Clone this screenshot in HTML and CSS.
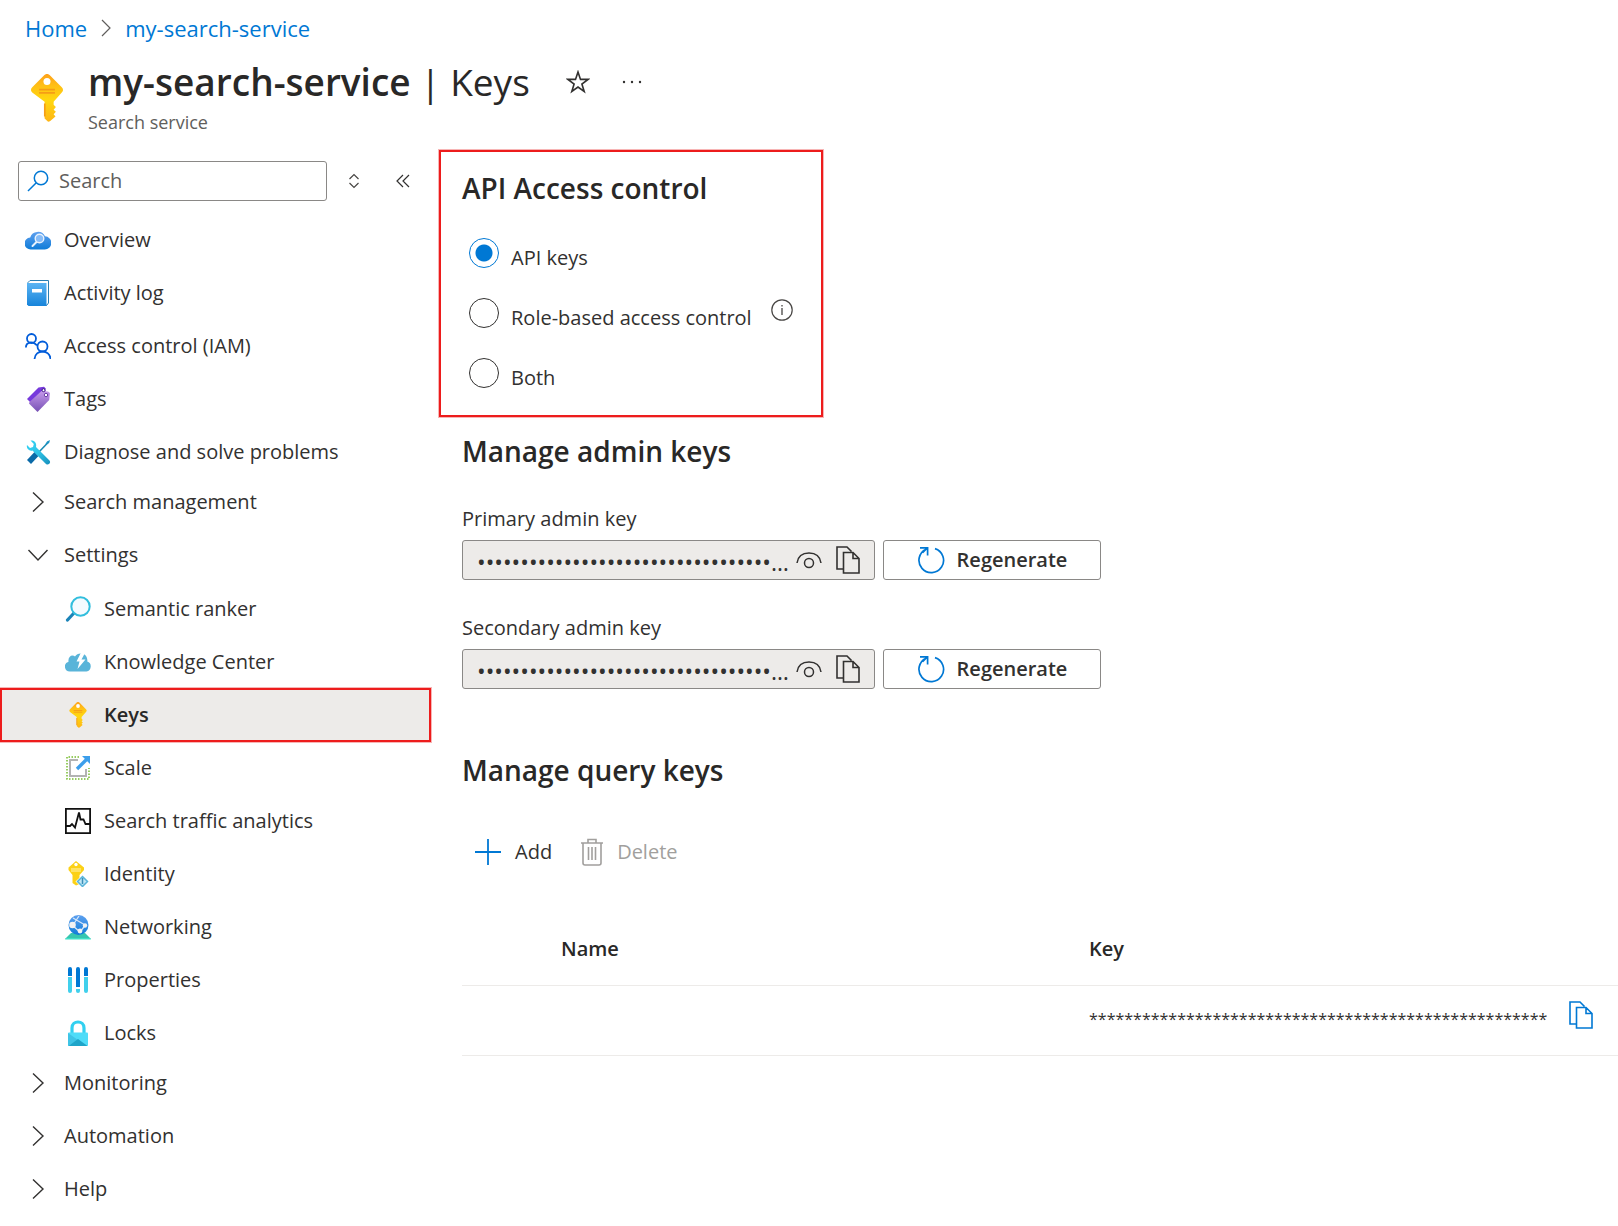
FILE: index.html
```html
<!DOCTYPE html>
<html lang="en">
<head>
<meta charset="utf-8">
<meta name="viewport" content="width=device-width, initial-scale=1">
<title>my-search-service | Keys</title>
<link rel="stylesheet" href="styles.css">
</head>
<body>
<svg class="sprite" aria-hidden="true">
  <defs>
    <linearGradient id="gold" x1="0" y1="0" x2="0" y2="1"><stop offset="0" stop-color="#fea11b"/><stop offset=".25" stop-color="#ffc016"/><stop offset=".55" stop-color="#ffd70f"/><stop offset="1" stop-color="#feb516"/></linearGradient>
    <linearGradient id="blue" x1="0" y1="0" x2="0" y2="1"><stop offset="0" stop-color="#5ea0ef"/><stop offset="1" stop-color="#0f7cd8"/></linearGradient>
    <linearGradient id="book" x1="0" y1="0" x2="0" y2="1"><stop offset="0" stop-color="#5bb4f3"/><stop offset="1" stop-color="#1784da"/></linearGradient>
    <linearGradient id="purple" x1="0" y1="0" x2="0" y2="1"><stop offset="0" stop-color="#c69aeb"/><stop offset="1" stop-color="#7650b4"/></linearGradient>
    <linearGradient id="teal" x1="0" y1="0" x2="1" y2="1"><stop offset="0" stop-color="#32d4f5"/><stop offset=".5" stop-color="#2fc3e6"/><stop offset="1" stop-color="#168fbc"/></linearGradient>
    <linearGradient id="cyan" x1="0" y1="0" x2="0" y2="1"><stop offset="0" stop-color="#32bedd"/><stop offset="1" stop-color="#50e6ff"/></linearGradient>
    <symbol id="key" viewBox="0 0 18 26">
      <path fill="url(#gold)" d="M7.600 .6a2 2 0 0 1 2.800 0l6.600 6.600a2 2 0 0 1 0 2.800l-4.400 5v1.700l1.200 1.200-1.200 1.400 1.200 1.200-1.200 1.300 1 1.200-3 2.600-1 .2-1.900-1.700V15L1 10a2 2 0 0 1 0-2.800z"/>
      <circle cx="9" cy="4" r="1.900" fill="#fff"/><path stroke="#f59d16" stroke-width=".9" d="M4.700 8.500h8.600M4.700 10.200h8.600M7.800 16v7"/>
    </symbol>
    <symbol id="chevron" viewBox="0 0 26 26"><path fill="none" stroke="#323130" stroke-width="1.400" d="M8 3.500l10 9.500-10 9.500"/></symbol>
    <symbol id="chevron-down" viewBox="0 0 26 26"><path fill="none" stroke="#323130" stroke-width="1.400" d="M3.500 8l9.500 10L22.500 8"/></symbol>
    <symbol id="copy" viewBox="0 0 24 28"><path fill="none" stroke="currentColor" stroke-width="1.600" d="M7.500 23H1V1h10l4.500 4.500M7.500 6.500h9.500l6 6V27H7.500zM17 6.500v6h6"/></symbol>
    <symbol id="eye" viewBox="0 0 26 18"><path fill="none" stroke="currentColor" stroke-width="1.500" d="M1 12C2 5 7 2 13 2s11 3 12 10"/><circle cx="13" cy="12" r="4.500" fill="none" stroke="currentColor" stroke-width="1.500"/></symbol>
    <symbol id="refresh" viewBox="0 0 28 28"><path fill="none" stroke="#0078d4" stroke-width="1.700" d="M18 2.600A12.300 12.300 0 1 1 9 3.200M3 1.800h7.600v7.600M10.400 2L5.600 6.600"/></symbol>
  </defs>
</svg>

<header class="page-header">
  <nav class="breadcrumb" aria-label="Breadcrumb">
    <a href="#">Home</a>
    <svg class="crumb-sep" viewBox="0 0 10 18"><path fill="none" stroke="#605e5c" stroke-width="1.200" d="M1 1l8 8-8 8"/></svg>
    <a href="#">my-search-service</a>
  </nav>
  <div class="title-row">
    <svg class="title-icon"><use href="#key"/></svg>
    <div>
      <div class="title-line">
        <h1><strong>my-search-service</strong> | Keys</h1>
        <button class="icon-button" aria-label="Add to favorites"><svg width="24" height="24" viewBox="0 0 24 24"><path fill="none" stroke="#323130" stroke-width="1.600" d="M12 2l2.500 7.400H22l-6.100 4.600 2.300 7.500L12 17l-6.200 4.500L8.100 14 2 9.400h7.500z"/></svg></button>
        <button class="icon-button" aria-label="More actions"><svg width="20" height="4" viewBox="0 0 20 4"><g fill="#323130"><circle cx="2" cy="2" r="1.200"/><circle cx="10" cy="2" r="1.200"/><circle cx="18" cy="2" r="1.200"/></g></svg></button>
      </div>
      <p class="subtitle">Search service</p>
    </div>
  </div>
</header>

<div class="layout">
  <aside class="sidebar">
    <div class="search-row">
      <label class="search-box">
        <svg width="22" height="22" viewBox="0 0 22 22"><g fill="none" stroke="#0078d4" stroke-width="1.500"><circle cx="14" cy="8" r="6.700"/><path d="M9.300 12.700L1 21"/></g></svg>
        <input type="search" placeholder="Search" aria-label="Search">
      </label>
      <button class="icon-button" aria-label="Expand or collapse all"><svg width="12" height="16" viewBox="0 0 12 16"><path fill="none" stroke="#484644" stroke-width="1.200" d="M1.500 6L6 1.500 10.500 6M1.500 10L6 14.500 10.500 10"/></svg></button>
      <button class="icon-button" aria-label="Collapse menu"><svg width="14" height="14" viewBox="0 0 14 14"><path fill="none" stroke="#323130" stroke-width="1.200" d="M7 1L1 7l6 6M13 1L7 7l6 6"/></svg></button>
    </div>
    <nav class="menu" aria-label="Resource menu">
      <ul class="menu-list">
        <li><a class="item" href="#"><svg class="icon" viewBox="0 0 26 26"><path fill="url(#blue)" d="M6 22.500a6 6 0 0 1-.8-12A8 8 0 0 1 20 9.300a6.600 6.600 0 0 1-.5 13.200z"/><path stroke="#e8f2fd" stroke-width="2" stroke-linecap="round" d="M12 14.500l-4.500 4.500"/><circle cx="14.500" cy="11.500" r="4.300" fill="#86bcf8" stroke="#e8f2fd" stroke-width="1.400"/></svg>Overview</a></li>
        <li><a class="item" href="#"><svg class="icon" viewBox="0 0 26 26"><path fill="#fff" stroke="#2a7fb4" stroke-width="1" d="M3 2.500L5 .5h18.500V23l-2 2.500z"/><path fill="url(#book)" d="M2 3h19.500v23H3.500L2 24.500z"/><path fill="#fff" d="M7 9h10v3.500H7z"/></svg>Activity log</a></li>
        <li><a class="item" href="#"><svg class="icon" viewBox="0 0 26 26"><g fill="none" stroke="#015cda" stroke-width="1.800"><circle cx="6.500" cy="5.500" r="4.500"/><path d="M.9 14.500C1 8.500 8 8 12 12.300"/><circle cx="17.500" cy="13.500" r="5"/><path d="M9.500 26c.5-10 15.500-10 16 0"/></g></svg>Access control (IAM)</a></li>
        <li><a class="item" href="#"><svg class="icon" viewBox="0 0 26 26"><path fill="#773adc" d="M2 13L13.500 1.500 19 .8l1.500 1.500v4L7 18z"/><path fill="url(#purple)" d="M4.500 16L16.500 5l6.500.5 2 1.500-.8 7L12.500 26 4 17.500z"/><circle cx="18.500" cy="4.200" r="1.500" fill="#fff" stroke="#3c1780"/><circle cx="21" cy="9" r="1.700" fill="#fff" stroke="#6b3fa8"/></svg>Tags</a></li>
        <li><a class="item" href="#"><svg class="icon" viewBox="0 0 26 26"><path stroke="#198ab3" stroke-width="1.600" d="M24 2.500L13 14"/><path fill="#1b93c4" d="M25 1l-1 3-2.500 1.500L20.500 5 22 2.500z"/><path stroke="#0b6aa8" stroke-width="5.500" d="M11.500 15L4 23"/><path fill="url(#teal)" d="M5.500 1.500C9 1 12 3.500 11 8l13.500 13.500a2.500 2.500 0 0 1-3.500 3.500L7.500 11.500C4 12.500 1 9.500 2 6l3 3 3-1 .8-3z"/></svg>Diagnose and solve problems</a></li>
      </ul>
      <ul class="menu-list">
        <li><button class="item"><svg class="icon"><use href="#chevron"/></svg>Search management</button></li>
        <li><button class="item" aria-expanded="true"><svg class="icon"><use href="#chevron-down"/></svg>Settings</button>
          <ul class="menu-list submenu">
            <li><a class="item" href="#"><svg class="icon" viewBox="0 0 26 26"><path stroke="#1b84b8" stroke-width="3.200" stroke-linecap="round" d="M9 17l-6.500 7"/><circle cx="15.500" cy="10.500" r="9.200" fill="#f4fbff" stroke="#32bedd" stroke-width="2"/></svg>Semantic ranker</a></li>
            <li><a class="item" href="#"><svg class="icon" viewBox="0 0 26 26"><path fill="#59b4d9" d="M5 22.500a5 5 0 0 1-1.500-9.800C3 9 5 6.500 7.500 6.500c1 0 1.800.3 2.500 1C11.500 5 14 4 17 4.500c3.500.6 5.800 4 5.300 8a5.200 5.200 0 0 1-.8 10z"/><path fill="#fff" d="M16 3.500L11.500 12.500h3L12.500 20l8-9.500h-4L20 4z"/></svg>Knowledge Center</a></li>
            <li><a class="item selected" href="#" aria-current="page"><svg class="icon"><use href="#key"/></svg>Keys</a></li>
            <li><a class="item" href="#"><svg class="icon" viewBox="0 0 26 26"><path fill="none" stroke="#76bc2d" stroke-width="1.500" stroke-dasharray="1.500 1.500" d="M14 2H2v22h22V13"/><path fill="none" stroke="#b3b3b3" stroke-width="2" d="M13 5H5v16h16v-7"/><path stroke="#3c9eeb" stroke-width="3.400" d="M12 14L21.500 4.500"/><path fill="#3c9eeb" d="M17 1h8v8z"/></svg>Scale</a></li>
            <li><a class="item" href="#"><svg class="icon" viewBox="0 0 26 26"><path fill="#fff" stroke="#111" stroke-width="1.800" d="M.9.900h24.200v24.200H.9z"/><path fill="none" stroke="#111" stroke-width="1.800" d="M1 18h4l2-2 3 3.500L14 4.500l1.500 7h3l2 4.500H25"/></svg>Search traffic analytics</a></li>
            <li><a class="item" href="#"><svg class="icon" viewBox="0 0 26 26"><path fill="#fcd116" d="M11 0l8 6.500V9l-4.500 5v9L11 24.500 7.500 22V14L3.500 9V6.500z"/><circle cx="11" cy="3.500" r="1.700" fill="#fff"/><path stroke="#fff3b0" stroke-width="1.200" d="M6 8h10M6 10h10"/><path fill="#fff" d="M17.500 14l7 6.500-7 6.500-7-6.500z"/><path fill="#bfe6f5" stroke="#59b4d9" stroke-width="1.500" d="M17.500 15.500l5 5-5 5-5-5z"/><path stroke="#3c8fb8" stroke-width="1.500" d="M17.500 17v6"/></svg>Identity</a></li>
            <li><a class="item" href="#"><svg class="icon" viewBox="0 0 26 26"><path fill="#36c6af" d="M6 19h14l6 6H0z"/><path fill="#3ee0c6" d="M1 24h24l1 1.500H0z"/><circle cx="13.500" cy="11" r="10" fill="url(#blue)"/><path fill="none" stroke="#d5e6fa" stroke-width="1.300" d="M8 11l6-9M7 11l8 7 5-6.500M8 4l12 7"/><circle cx="7.500" cy="11" r="3.300" fill="#f2f2f2"/><circle cx="15" cy="17" r="2.400" fill="#f2f2f2"/><circle cx="20" cy="11.500" r="2.200" fill="#f2f2f2"/></svg>Networking</a></li>
            <li><a class="item" href="#"><svg class="icon" viewBox="0 0 26 26"><path fill="#41d0ec" d="M3 10h4v14a2 2 0 0 1-4 0zM19 10h4v14a2 2 0 0 1-4 0zM11 22h4v2a2 2 0 0 1-4 0z"/><path fill="#0078d4" d="M3 2a2 2 0 0 1 4 0v7H3zM19 2a2 2 0 0 1 4 0v7h-4zM11 2a2 2 0 0 1 4 0v18h-4z"/></svg>Properties</a></li>
            <li><a class="item" href="#"><svg class="icon" viewBox="0 0 26 26"><path fill="none" stroke="#32d0f0" stroke-width="3.200" d="M7 14V8c0-8 12-8 12 0v6"/><rect x="3" y="12.500" width="20" height="13.500" rx="1" fill="#4fdcf8"/><path fill="#3fc4e6" d="M3 13l10 7-10 6z"/><path fill="#1fa5c9" d="M3.500 26l9.500-7 9.500 7z"/></svg>Locks</a></li>
          </ul>
        </li>
      </ul>
      <ul class="menu-list">
        <li><button class="item"><svg class="icon"><use href="#chevron"/></svg>Monitoring</button></li>
        <li><button class="item"><svg class="icon"><use href="#chevron"/></svg>Automation</button></li>
        <li><button class="item"><svg class="icon"><use href="#chevron"/></svg>Help</button></li>
      </ul>
    </nav>
  </aside>

  <main class="content">
    <fieldset class="access">
      <legend class="heading">API Access control</legend>
      <div class="choice"><input type="radio" name="access" id="access-keys" checked><label for="access-keys">API keys</label></div>
      <div class="choice"><input type="radio" name="access" id="access-role"><label for="access-role">Role-based access control</label>
        <button class="icon-button info" aria-label="About role-based access control"><svg width="22" height="22" viewBox="0 0 22 22"><circle cx="11" cy="11" r="10.200" fill="none" stroke="#484644" stroke-width="1.200"/><path stroke="#484644" stroke-width="1.300" d="M11 9v7M11 6v1.500"/></svg></button></div>
      <div class="choice"><input type="radio" name="access" id="access-both"><label for="access-both">Both</label></div>
    </fieldset>

    <section class="admin">
      <h2 class="heading">Manage admin keys</h2>
      <div class="key-group">
        <label for="primary">Primary admin key</label>
        <div class="key-row">
          <div class="key-field"><input type="password" id="primary" readonly value="0000000000000000000000000000000000000000000000000000">
            <button class="icon-button" aria-label="Show primary key"><svg width="26" height="18"><use href="#eye"/></svg></button>
            <button class="icon-button" aria-label="Copy primary key"><svg width="24" height="28"><use href="#copy"/></svg></button></div>
          <button class="regenerate"><svg width="28" height="28"><use href="#refresh"/></svg>Regenerate</button>
        </div>
      </div>
      <div class="key-group">
        <label for="secondary">Secondary admin key</label>
        <div class="key-row">
          <div class="key-field"><input type="password" id="secondary" readonly value="0000000000000000000000000000000000000000000000000000">
            <button class="icon-button" aria-label="Show secondary key"><svg width="26" height="18"><use href="#eye"/></svg></button>
            <button class="icon-button" aria-label="Copy secondary key"><svg width="24" height="28"><use href="#copy"/></svg></button></div>
          <button class="regenerate"><svg width="28" height="28"><use href="#refresh"/></svg>Regenerate</button>
        </div>
      </div>
    </section>

    <section class="query">
      <h2 class="heading">Manage query keys</h2>
      <div class="toolbar">
        <button class="command"><svg width="28" height="28" viewBox="0 0 28 28"><path stroke="#0078d4" stroke-width="1.800" d="M14 1v26M1 14h26"/></svg>Add</button>
        <button class="command" disabled><svg width="24" height="28" viewBox="0 0 24 28"><g fill="none" stroke="#a19f9d" stroke-width="1.600"><path d="M1 5h22M3 5v20q0 2 2 2h14q2 0 2-2V5M8 5V1.500h8V5M8.500 9v13M12 9v13M15.500 9v13"/></g></svg>Delete</button>
      </div>
      <table class="keys">
        <colgroup><col class="col-select"><col class="col-name"><col></colgroup>
        <thead><tr><td></td><th scope="col">Name</th><th scope="col">Key</th></tr></thead>
        <tbody><tr><td></td><td></td><td><div class="key-cell"><span class="masked">****************************************************</span><button class="icon-button copy-key" aria-label="Copy query key"><svg width="24" height="28"><use href="#copy"/></svg></button></div></td></tr></tbody>
      </table>
    </section>
  </main>
</div>
</body>
</html>
```
FILE: styles.css
```css
* { box-sizing: border-box; }

body {
  margin: 0;
  background: #fff;
  color: #323130;
  font: 20px/28px "Open Sans", "Noto Sans", sans-serif;
}

button, input { font: inherit; color: inherit; }
button { border: 0; padding: 0; background: none; cursor: pointer; }
a { color: inherit; text-decoration: none; }
h1, h2, p, ul { margin: 0; padding: 0; }
ul { list-style: none; }
svg { display: block; flex: none; }

.sprite { position: absolute; width: 0; height: 0; }
.icon-button { display: flex; align-items: center; justify-content: center; flex: none; }

/* Header */
.breadcrumb { display: flex; align-items: center; gap: 14px; padding: 14px 25px 0; color: #0078d4; font-size: 22px; }
.crumb-sep { width: 10px; height: 18px; }
.title-row { display: flex; align-items: flex-start; gap: 24px; padding: 16px 30px 0; }
.title-icon { width: 34px; height: 48px; margin-top: 16px; }
.title-line { display: flex; align-items: center; gap: 32px; color: #292827; }
h1 { margin-right: 4px; font-size: 37px; line-height: 48px; font-weight: 400; }
h1 strong { font-weight: 600; }
.subtitle { padding-top: 2px; color: #605e5c; font-size: 18px; line-height: 28px; }

.layout { display: flex; align-items: flex-start; gap: 8px; padding-top: 14px; }

/* Sidebar */
.sidebar { flex: 0 0 431px; }
.search-row { display: flex; align-items: center; padding: 11px 21px 0 18px; }
.search-box {
  display: flex; align-items: center; gap: 10px; flex: 1;
  height: 40px; margin-right: 21px; padding: 0 8px;
  border: 1px solid #8a8886; border-radius: 3px;
}
.search-box input { flex: 1; min-width: 0; border: 0; padding: 0; background: none; outline: 0; }
.search-box input::placeholder { color: #605e5c; opacity: 1; }
.search-row .icon-button + .icon-button { margin-left: 36px; }

.menu { padding-top: 14px; }
.menu-list { display: grid; gap: 3px; }
.item {
  display: flex; align-items: center; gap: 13px;
  width: 100%; height: 50px; padding-left: 25px; text-align: left;
}
.icon { width: 26px; height: 26px; }
.submenu { padding-top: 4px; }
.submenu .item { padding-left: 65px; }
.submenu .selected {
  width: auto; margin: 0 2px; padding-left: 63px;
  background: #edebe9; outline: 2px solid #ed1c1c; box-shadow: 0 0 0 3px #f7b5b5;
  color: #292827; font-weight: 600;
}

/* Main */
.content { flex: 1; min-width: 0; }
.heading { padding: 0; color: #292827; font-size: 28px; line-height: 40px; font-weight: 600; }

.access {
  display: grid; gap: 30px; width: 384px; margin: 0; padding: 16px 21px 27px;
  border: 2px solid #ed1c1c; box-shadow: 0 0 0 1px #f7b5b5;
}
.access legend { float: left; width: 100%; }
.choice { display: flex; align-items: flex-start; height: 30px; padding-left: 7px; }
.choice input {
  appearance: none; flex: none; width: 30px; height: 30px; margin: 0 12px 0 0;
  border: 1px solid #323130; border-radius: 50%;
}
.choice input:checked { border-color: #0078d4; background: radial-gradient(#0078d4 8px, transparent 9px); }
.choice label { padding-top: 6px; }
.info { margin: 1px 0 0 19px; }

.admin { padding: 14px 0 0 23px; }
.key-group label { display: block; }
.key-group { padding-top: 34px; }
.key-row { display: flex; gap: 8px; margin-top: 7px; }
.key-field {
  display: flex; align-items: center; gap: 14px; width: 413px; height: 40px; padding: 0 14px;
  border: 1px solid #8a8886; border-radius: 3px; background: #edebe9;
}
.key-field input {
  flex: 1; min-width: 0; margin-right: -14px; padding: 4px 0 0; border: 0; background: none;
  font-size: 23px; text-overflow: ellipsis; outline: 0;
}
.regenerate {
  display: flex; align-items: center; justify-content: center; gap: 12px;
  width: 218px; height: 40px; border: 1px solid #8a8886; border-radius: 3px; font-weight: 600;
}

.query { padding: 61px 0 0 23px; }
.toolbar { display: flex; gap: 28px; padding: 48px 12px 0; }
.command { display: flex; align-items: center; gap: 13px; }
.command:disabled { color: #a19f9d; cursor: default; }

.keys { width: 100%; margin-top: 48px; border-collapse: collapse; table-layout: fixed; }
.col-select { width: 99px; }
.col-name { width: 528px; }
.keys th { height: 71px; padding: 0; color: #292827; text-align: left; font-weight: 600; }
.keys tr { border-bottom: 1px solid #edebe9; }
.keys tbody td { height: 70px; padding: 15px 0 0; vertical-align: top; }
.key-cell { display: flex; align-items: flex-start; gap: 22px; }
.masked { padding-top: 4px; font-size: 16px; }
.copy-key { color: #0078d4; }
```
